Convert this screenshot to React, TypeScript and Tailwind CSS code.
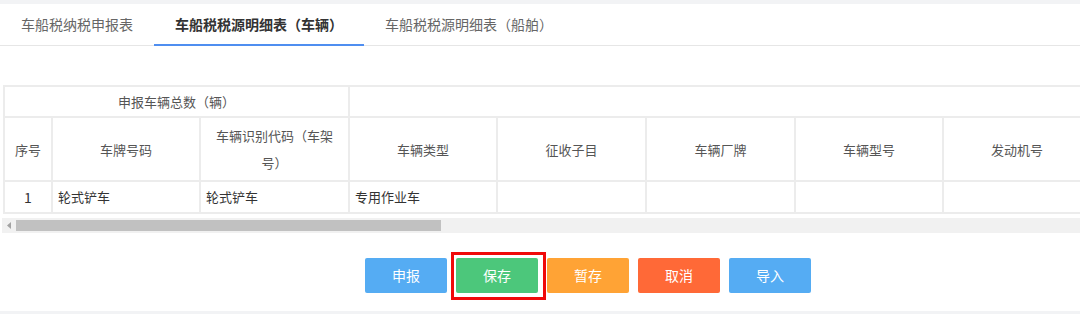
import React from "react";

const font = { fontFamily: "'Noto Sans CJK SC', 'Noto Sans', sans-serif" };

const headers = [
  "序号",
  "车牌号码",
  "车辆识别代码（车架号）",
  "车辆类型",
  "征收子目",
  "车辆厂牌",
  "车辆型号",
  "发动机号",
  "",
  "",
];
const widths = [48, 148, 149, 148, 149, 149, 148, 148, 148, 148];

export default function App() {
  return (
    <div className="w-[1080px] h-[314px] bg-white overflow-hidden flex flex-col" style={font}>
      <div className="h-[4px] bg-[#f2f3f5]" />
      <div className="h-[42px] flex border-b border-[#e6e6e6]">
        <div className="px-[21px] flex items-center text-[14px] text-[#666]">车船税纳税申报表</div>
        <div className="px-[21px] flex items-center text-[14px] text-[#333] font-bold border-b-2 border-[#4f8ef0] -mb-px">
          车船税税源明细表（车辆）
        </div>
        <div className="px-[21px] flex items-center text-[14px] text-[#666]">车船税税源明细表（船舶）</div>
      </div>

      <div className="mt-[39px] ml-[3px] overflow-hidden">
        <table
          className="table-fixed border-collapse text-[13px] text-[#555]"
          style={{ width: widths.reduce((a, b) => a + b, 0) }}
        >
          <colgroup>
            {widths.map((w, i) => (
              <col key={i} style={{ width: w }} />
            ))}
          </colgroup>
          <tbody>
            <tr className="h-[31px]">
              <td colSpan={3} className="border-2 border-[#ececec] text-center">
                申报车辆总数（辆）
              </td>
              <td colSpan={7} className="border-2 border-[#ececec]" />
            </tr>
            <tr className="h-[64px]">
              {headers.map((h, i) => (
                <td
                  key={i}
                  className={
                    i === 0
                      ? "border-2 border-[#ececec] text-center px-0 leading-[27px] whitespace-nowrap"
                      : "border-2 border-[#ececec] text-center px-[12px] leading-[27px]"
                  }
                >
                  {h}
                </td>
              ))}
            </tr>
            <tr className="h-[32px] text-[#333]">
              <td className="border-2 border-[#ececec] text-center text-[14px]">1</td>
              <td className="border-2 border-[#ececec] px-[5px]">轮式铲车</td>
              <td className="border-2 border-[#ececec] px-[5px]">轮式铲车</td>
              <td className="border-2 border-[#ececec] px-[5px]">专用作业车</td>
              <td className="border-2 border-[#ececec]" />
              <td className="border-2 border-[#ececec]" />
              <td className="border-2 border-[#ececec]" />
              <td className="border-2 border-[#ececec]" />
              <td className="border-2 border-[#ececec]" />
              <td className="border-2 border-[#ececec]" />
            </tr>
          </tbody>
        </table>
      </div>

      <div className="mt-[4px] ml-[2px] h-[15px] bg-[#f1f1f1] flex items-center">
        <div className="w-[14px] flex items-center justify-center">
          <svg width="4" height="7" viewBox="0 0 4 7">
            <path d="M4 0 L0 3.5 L4 7 Z" fill="#a3a3a3" />
          </svg>
        </div>
        <div className="w-[425px] h-[11px] bg-[#c1c1c1]" />
      </div>

      <div className="mt-[25px] pl-[365px] flex gap-[9px]">
        <button className="w-[82px] h-[35px] rounded-[2px] bg-[#55acf3] text-white text-[14px]">申报</button>
        <div className="relative">
          <button className="w-[82px] h-[35px] rounded-[2px] bg-[#4cc77b] text-white text-[14px]">保存</button>
          <div className="absolute left-[-5px] right-[-8px] top-[-6px] bottom-[-7px] border-[3px] border-[#f00a0a]" />
        </div>
        <button className="w-[82px] h-[35px] rounded-[2px] bg-[#ffa335] text-white text-[14px]">暂存</button>
        <button className="w-[82px] h-[35px] rounded-[2px] bg-[#ff6937] text-white text-[14px]">取消</button>
        <button className="w-[82px] h-[35px] rounded-[2px] bg-[#55acf3] text-white text-[14px]">导入</button>
      </div>

      <div className="mt-auto h-[3px] bg-[#f2f3f5]" />
    </div>
  );
}
